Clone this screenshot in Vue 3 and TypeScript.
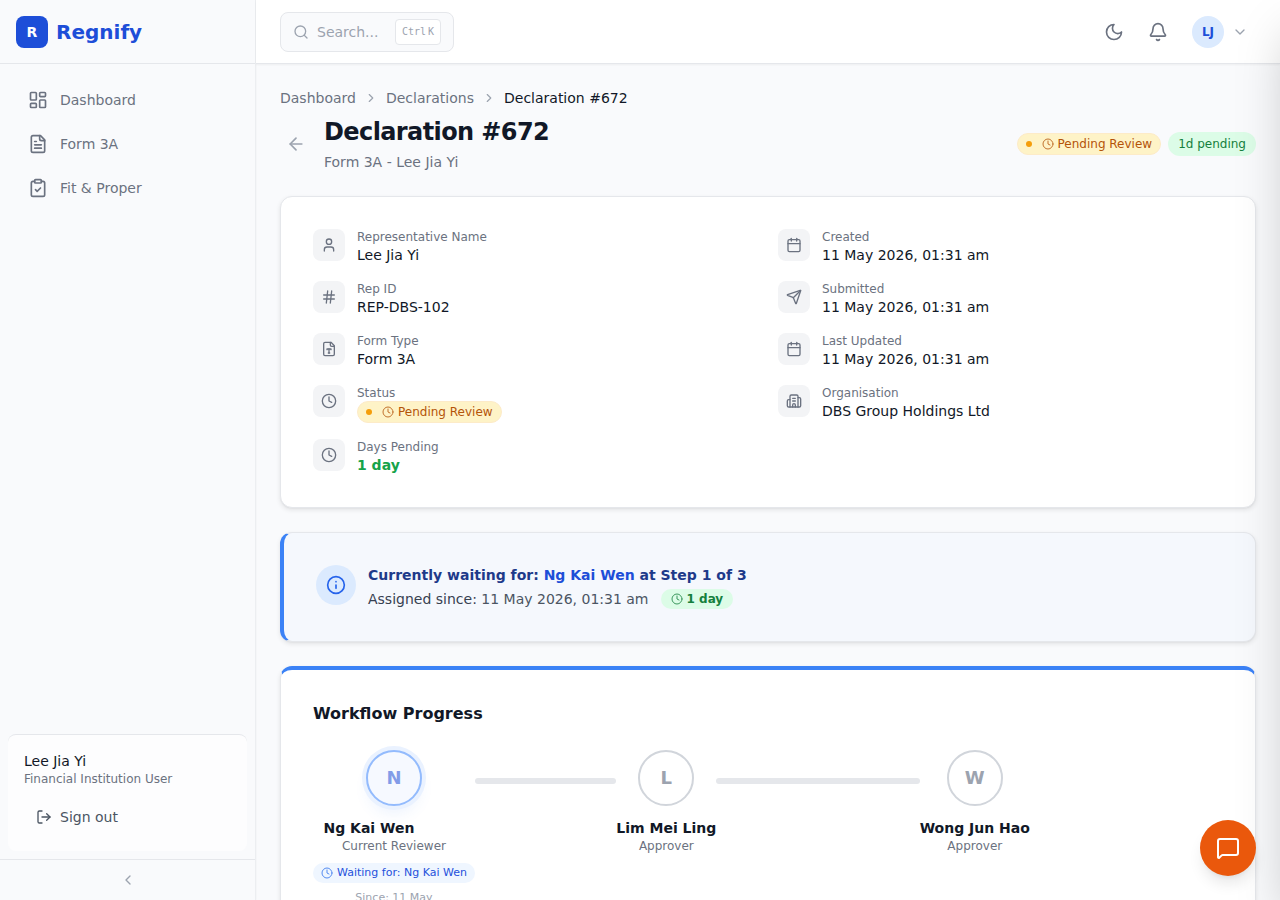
<script setup lang="ts">
import { h, ref, type FunctionalComponent } from 'vue'

const icons: Record<string, string[]> = {
  dashboard: [
    'M4 3h5a1 1 0 0 1 1 1v7a1 1 0 0 1-1 1H4a1 1 0 0 1-1-1V4a1 1 0 0 1 1-1z',
    'M15 3h5a1 1 0 0 1 1 1v3a1 1 0 0 1-1 1h-5a1 1 0 0 1-1-1V4a1 1 0 0 1 1-1z',
    'M15 12h5a1 1 0 0 1 1 1v7a1 1 0 0 1-1 1h-5a1 1 0 0 1-1-1v-7a1 1 0 0 1 1-1z',
    'M4 16h5a1 1 0 0 1 1 1v3a1 1 0 0 1-1 1H4a1 1 0 0 1-1-1v-3a1 1 0 0 1 1-1z',
  ],
  fileText: [
    'M15 2H6a2 2 0 0 0-2 2v16a2 2 0 0 0 2 2h12a2 2 0 0 0 2-2V7Z',
    'M14 2v4a2 2 0 0 0 2 2h4',
    'M10 9H8',
    'M16 13H8',
    'M16 17H8',
  ],
  fileType: [
    'M15 2H6a2 2 0 0 0-2 2v16a2 2 0 0 0 2 2h12a2 2 0 0 0 2-2V7Z',
    'M14 2v4a2 2 0 0 0 2 2h4',
    'M9 13v-1h6v1',
    'M12 12v6',
    'M11 18h2',
  ],
  clipboard: [
    'M9 2h6a1 1 0 0 1 1 1v2a1 1 0 0 1-1 1H9a1 1 0 0 1-1-1V3a1 1 0 0 1 1-1z',
    'M16 4h2a2 2 0 0 1 2 2v14a2 2 0 0 1-2 2H6a2 2 0 0 1-2-2V6a2 2 0 0 1 2-2h2',
    'm9 14 2 2 4-4',
  ],
  signOut: ['m16 17 5-5-5-5', 'M21 12H9', 'M9 21H5a2 2 0 0 1-2-2V5a2 2 0 0 1 2-2h4'],
  chevronLeft: ['m15 18-6-6 6-6'],
  chevronRight: ['m9 18 6-6-6-6'],
  chevronDown: ['m6 9 6 6 6-6'],
  arrowLeft: ['m12 19-7-7 7-7', 'M19 12H5'],
  search: ['M19 11a8 8 0 1 1-16 0 8 8 0 0 1 16 0z', 'm21 21-4.3-4.3'],
  moon: ['M12 3a6 6 0 0 0 9 9 9 9 0 1 1-9-9Z'],
  bell: [
    'M10.268 21a2 2 0 0 0 3.464 0',
    'M3.262 15.326A1 1 0 0 0 4 17h16a1 1 0 0 0 .74-1.673C19.41 13.956 18 12.499 18 8A6 6 0 0 0 6 8c0 4.499-1.411 5.956-2.738 7.326',
  ],
  clock: ['M22 12a10 10 0 1 1-20 0 10 10 0 0 1 20 0z', 'M12 6v6l4 2'],
  info: ['M22 12a10 10 0 1 1-20 0 10 10 0 0 1 20 0z', 'M12 16v-4', 'M12 8h.01'],
  user: ['M19 21v-2a4 4 0 0 0-4-4H9a4 4 0 0 0-4 4v2', 'M16 7a4 4 0 1 1-8 0 4 4 0 0 1 8 0z'],
  hash: ['M4 9h16', 'M4 15h16', 'M10 3 8 21', 'M16 3l-2 18'],
  calendar: [
    'M8 2v4',
    'M16 2v4',
    'M5 4h14a2 2 0 0 1 2 2v14a2 2 0 0 1-2 2H5a2 2 0 0 1-2-2V6a2 2 0 0 1 2-2z',
    'M3 10h18',
  ],
  send: [
    'M14.536 21.686a.5.5 0 0 0 .937-.024l6.5-19a.496.496 0 0 0-.635-.635l-19 6.5a.5.5 0 0 0-.024.937l7.93 3.18a2 2 0 0 1 1.112 1.11z',
    'm21.854 2.147-10.94 10.939',
  ],
  building: [
    'M10 12h4',
    'M10 8h4',
    'M14 21v-3a2 2 0 0 0-4 0v3',
    'M6 10H4a2 2 0 0 0-2 2v7a2 2 0 0 0 2 2h16a2 2 0 0 0 2-2V9a2 2 0 0 0-2-2h-2',
    'M6 21V5a2 2 0 0 1 2-2h8a2 2 0 0 1 2 2v16',
  ],
  message: [
    'M22 17a2 2 0 0 1-2 2H6.828a2 2 0 0 0-1.414.586l-2.202 2.202A.71.71 0 0 1 2 21.286V5a2 2 0 0 1 2-2h16a2 2 0 0 1 2 2z',
  ],
}

const Icon: FunctionalComponent<{ name: string; size: number; weight?: number }> = (props) =>
  h(
    'svg',
    {
      width: props.size,
      height: props.size,
      viewBox: '0 0 24 24',
      fill: 'none',
      stroke: 'currentColor',
      'stroke-width': props.weight ?? 2,
      'stroke-linecap': 'round',
      'stroke-linejoin': 'round',
      'aria-hidden': 'true',
      style: { display: 'block', flexShrink: 0 },
    },
    icons[props.name].map((d) => h('path', { d })),
  )
Icon.props = ['name', 'size', 'weight']

interface Field {
  icon: string
  label: string
  value: string
  kind?: 'status' | 'days'
}

interface Step {
  name: string
  role: string
  waiting?: string
  since?: string
}

const query = ref('')

const nav = [
  { icon: 'dashboard', label: 'Dashboard' },
  { icon: 'fileText', label: 'Form 3A' },
  { icon: 'clipboard', label: 'Fit & Proper' },
]

const columns: Field[][] = [
  [
    { icon: 'user', label: 'Representative Name', value: 'Lee Jia Yi' },
    { icon: 'hash', label: 'Rep ID', value: 'REP-DBS-102' },
    { icon: 'fileType', label: 'Form Type', value: 'Form 3A' },
    { icon: 'clock', label: 'Status', value: 'Pending Review', kind: 'status' },
    { icon: 'clock', label: 'Days Pending', value: '1 day', kind: 'days' },
  ],
  [
    { icon: 'calendar', label: 'Created', value: '11 May 2026, 01:31 am' },
    { icon: 'send', label: 'Submitted', value: '11 May 2026, 01:31 am' },
    { icon: 'calendar', label: 'Last Updated', value: '11 May 2026, 01:31 am' },
    { icon: 'building', label: 'Organisation', value: 'DBS Group Holdings Ltd' },
  ],
]

const steps: Step[] = [
  { name: 'Ng Kai Wen', role: 'Current Reviewer', waiting: 'Waiting for: Ng Kai Wen', since: 'Since: 11 May' },
  { name: 'Lim Mei Ling', role: 'Approver' },
  { name: 'Wong Jun Hao', role: 'Approver' },
]
</script>

<template>
  <div class="shell">
    <aside class="sidebar">
      <div class="brand">
        <span class="brand-mark">R</span>
        <span class="brand-name">Regnify</span>
      </div>
      <nav class="nav" aria-label="Main">
        <a v-for="item in nav" :key="item.label" href="#" class="nav-link">
          <Icon :name="item.icon" :size="20" />
          {{ item.label }}
        </a>
      </nav>
      <div class="account">
        <div class="account-name">Lee Jia Yi</div>
        <div class="account-role">Financial Institution User</div>
        <button type="button" class="sign-out">
          <Icon name="signOut" :size="16" />
          Sign out
        </button>
      </div>
      <button type="button" class="collapse" aria-label="Collapse sidebar">
        <Icon name="chevronLeft" :size="16" />
      </button>
    </aside>

    <div class="workspace">
      <header class="topbar">
        <label class="search">
          <Icon name="search" :size="16" />
          <input v-model="query" type="text" placeholder="Search..." aria-label="Search" />
          <kbd class="shortcut"><span>Ctrl</span><span>K</span></kbd>
        </label>
        <div class="actions">
          <button type="button" class="icon-button" aria-label="Toggle dark mode">
            <Icon name="moon" :size="20" />
          </button>
          <button type="button" class="icon-button" aria-label="Notifications">
            <Icon name="bell" :size="20" />
          </button>
          <button type="button" class="profile" aria-label="Account menu">
            <span class="avatar">LJ</span>
            <Icon name="chevronDown" :size="16" />
          </button>
        </div>
      </header>

      <main class="page">
        <nav class="crumbs" aria-label="Breadcrumb">
          <a href="#">Dashboard</a>
          <Icon name="chevronRight" :size="14" />
          <a href="#">Declarations</a>
          <Icon name="chevronRight" :size="14" />
          <span class="crumb-current" aria-current="page">Declaration #672</span>
        </nav>

        <div class="heading">
          <button type="button" class="back" aria-label="Back">
            <Icon name="arrowLeft" :size="20" />
          </button>
          <div class="heading-text">
            <h1>Declaration #672</h1>
            <p>Form 3A - Lee Jia Yi</p>
          </div>
          <div class="heading-badges">
            <span class="status">
              <span class="dot"></span>
              <span class="status-label"><Icon name="clock" :size="12" />Pending Review</span>
            </span>
            <span class="age">1d pending</span>
          </div>
        </div>

        <section class="card details">
          <div v-for="(column, i) in columns" :key="i" class="detail-column">
            <div v-for="field in column" :key="field.label" class="field">
              <span class="tile"><Icon :name="field.icon" :size="16" /></span>
              <div class="field-text">
                <div class="field-label">{{ field.label }}</div>
                <span v-if="field.kind === 'status'" class="status">
                  <span class="dot"></span>
                  <span class="status-label"><Icon name="clock" :size="12" />{{ field.value }}</span>
                </span>
                <div v-else class="field-value" :class="{ days: field.kind === 'days' }">{{ field.value }}</div>
              </div>
            </div>
          </div>
        </section>

        <section class="card waiting">
          <span class="waiting-icon"><Icon name="info" :size="20" /></span>
          <div class="waiting-text">
            <p class="waiting-title">Currently waiting for: <span>Ng Kai Wen</span> at Step 1 of 3</p>
            <div class="waiting-meta">
              <span><span class="meta-label">Assigned since:</span> 11 May 2026, 01:31 am</span>
              <span class="elapsed"><Icon name="clock" :size="12" />1 day</span>
            </div>
          </div>
        </section>

        <section class="card workflow">
          <h2>Workflow Progress</h2>
          <ol class="steps">
            <li v-for="(step, i) in steps" :key="step.name" class="step" :class="{ current: i === 0 }">
              <div class="person">
                <span class="person-mark">{{ step.name[0] }}</span>
                <span class="person-name">{{ step.name }}</span>
                <span class="person-role">{{ step.role }}</span>
                <span v-if="step.waiting" class="person-waiting"><Icon name="clock" :size="12" />{{ step.waiting }}</span>
                <span v-if="step.since" class="person-since">{{ step.since }}</span>
              </div>
              <span v-if="i < steps.length - 1" class="connector"></span>
            </li>
          </ol>
        </section>
      </main>
    </div>

    <div class="drawer" aria-hidden="true"></div>
    <button type="button" class="chat" aria-label="Open chat">
      <Icon name="message" :size="24" />
    </button>
  </div>
</template>

<style>
body {
  margin: 0;
  background: #f9fafc;
}
</style>

<style scoped>
.shell,
.shell * {
  box-sizing: border-box;
}

.shell {
  display: flex;
  height: 100vh;
  overflow: hidden;
  background: #f9fafc;
  color: #111827;
  font-family: 'DejaVu Sans', sans-serif;
  font-size: 14px;
  line-height: 20px;
}

button,
input {
  margin: 0;
  padding: 0;
  border: 0;
  background: none;
  color: inherit;
  font: inherit;
}

button {
  cursor: pointer;
}

a {
  color: inherit;
  text-decoration: none;
}

h1,
h2,
p,
ol {
  margin: 0;
  padding: 0;
}

.sidebar {
  display: flex;
  flex-direction: column;
  flex: 0 0 256px;
  border-right: 1px solid #eceef1;
  box-shadow: 0 1px 2px rgba(0, 0, 0, 0.05);
}

.brand {
  display: flex;
  align-items: center;
  gap: 8px;
  height: 64px;
  padding: 0 16px;
  border-bottom: 1px solid #e5e7eb;
}

.brand-mark {
  display: grid;
  place-items: center;
  width: 32px;
  height: 32px;
  border-radius: 8px;
  background: #1d4ed8;
  color: #fff;
  font-weight: 700;
}

.brand-name {
  color: #1d4ed8;
  font-size: 20px;
  font-weight: 700;
  line-height: 28px;
}

.nav {
  display: flex;
  flex: 1;
  flex-direction: column;
  gap: 4px;
  padding: 16px;
}

.nav-link {
  display: flex;
  align-items: center;
  gap: 12px;
  height: 40px;
  padding: 0 12px;
  border-radius: 8px;
  color: #6b7280;
}

.account {
  margin: 8px;
  padding: 16px;
  border-top: 1px solid #e5e7eb;
  border-radius: 8px;
  background: #fdfdfe;
}

.account-role {
  color: #6b7280;
  font-size: 12px;
  line-height: 16px;
}

.sign-out {
  display: flex;
  align-items: center;
  gap: 8px;
  height: 36px;
  margin-top: 12px;
  padding: 0 12px;
  color: #4b5563;
}

.collapse {
  display: grid;
  place-items: center;
  height: 41px;
  border-top: 1px solid #e5e7eb;
  color: #9ca3af;
}

.workspace {
  display: flex;
  flex: 1;
  flex-direction: column;
  min-width: 0;
}

.topbar {
  display: flex;
  flex: 0 0 64px;
  align-items: center;
  justify-content: space-between;
  padding: 0 24px;
  border-bottom: 1px solid #e5e7eb;
  background: #fff;
  box-shadow: 0 1px 2px rgba(0, 0, 0, 0.05);
}

.search {
  display: flex;
  align-items: center;
  gap: 8px;
  width: 174px;
  height: 40px;
  padding: 0 12px;
  border: 1px solid #e5e7eb;
  border-radius: 8px;
  background: #f9fafc;
  color: #9ca3af;
}

.search input {
  flex: 1;
  min-width: 0;
  outline: 0;
  color: #111827;
}

.search input::placeholder {
  color: #9ca3af;
  opacity: 1;
}

.shortcut {
  display: flex;
  gap: 2px;
  padding: 2px 6px;
  border: 1px solid #e5e7eb;
  border-radius: 4px;
  background: #fff;
  font-family: 'DejaVu Sans Mono', monospace;
  font-size: 10px;
}

.actions {
  display: flex;
  align-items: center;
  gap: 8px;
}

.icon-button {
  padding: 8px;
  color: #6b7280;
}

.profile {
  display: flex;
  align-items: center;
  gap: 8px;
  padding: 0 8px;
  color: #9ca3af;
}

.avatar {
  display: grid;
  place-items: center;
  width: 32px;
  height: 32px;
  border-radius: 50%;
  background: #dbeafe;
  color: #1d4ed8;
  font-size: 12px;
  font-weight: 700;
}

.page {
  display: flex;
  flex: 1;
  flex-direction: column;
  gap: 24px;
  min-height: 0;
  padding: 24px;
  overflow-y: auto;
  scrollbar-width: none;
}

.crumbs {
  display: flex;
  align-items: center;
  gap: 8px;
  margin-bottom: -16px;
  color: #9ca3af;
}

.crumbs a {
  color: #6b7280;
}

.crumbs .crumb-current {
  color: #111827;
}

.heading {
  display: flex;
  align-items: center;
  gap: 12px;
}

.back {
  padding: 6px;
  color: #9ca3af;
}

.heading-text {
  flex: 1;
  min-width: 0;
}

.heading-text h1 {
  font-size: 24px;
  font-weight: 700;
  letter-spacing: -0.025em;
  line-height: 32px;
}

.heading-text p {
  margin-top: 4px;
  color: #6b7280;
}

.heading-badges {
  display: flex;
  align-items: center;
  gap: 7px;
}

.status {
  display: flex;
  align-items: center;
  gap: 10px;
  width: fit-content;
  padding: 0 8px;
  border: 1px solid #fdebc8;
  border-radius: 11px;
  background: #fef3c7;
  color: #b45309;
  font-size: 12px;
  white-space: nowrap;
}

.status-label {
  display: flex;
  align-items: center;
  gap: 4px;
}

.status-label svg,
.elapsed svg,
.person-waiting svg {
  opacity: 0.8;
}

.dot {
  width: 6px;
  height: 6px;
  border-radius: 50%;
  background: #f59e0b;
}

.age {
  padding: 2px 10px;
  border-radius: 12px;
  background: #dcfce7;
  color: #15803d;
  font-size: 12px;
  white-space: nowrap;
}

.card {
  flex-shrink: 0;
  padding: 32px;
  border: 1px solid #e5e7eb;
  border-radius: 12px;
  background: #fff;
  box-shadow: 0 2px 5px rgba(0, 0, 0, 0.09), 0 1px 2px -1px rgba(0, 0, 0, 0.1);
}

.details {
  display: grid;
  grid-template-columns: 1fr 1fr;
  gap: 20px;
}

.detail-column {
  display: flex;
  flex-direction: column;
  gap: 16px;
}

.field {
  display: flex;
  gap: 12px;
}

.tile {
  display: grid;
  place-items: center;
  width: 32px;
  height: 32px;
  border-radius: 8px;
  background: #f3f4f6;
  color: #6b7280;
}

.field-label {
  color: #6b7280;
  font-size: 12px;
  line-height: 16px;
}

.days {
  color: #16a34a;
  font-weight: 700;
}

.waiting {
  display: flex;
  gap: 12px;
  border-left: 4px solid #3b82f6;
  background: #f5f8fd;
}

.waiting-icon {
  display: grid;
  flex-shrink: 0;
  place-items: center;
  width: 40px;
  height: 40px;
  border-radius: 50%;
  background: #dbeafe;
  color: #2563eb;
}

.waiting-title {
  color: #1e3a8a;
  font-weight: 700;
}

.waiting-title span {
  color: #1d4ed8;
}

.waiting-meta {
  display: flex;
  align-items: center;
  gap: 12px;
  margin-top: 4px;
  color: #4b5563;
}

.meta-label {
  color: #374151;
}

.elapsed {
  display: flex;
  align-items: center;
  gap: 4px;
  padding: 0 10px;
  border-radius: 10px;
  background: #dcfce7;
  color: #15803d;
  font-size: 12px;
  font-weight: 700;
}

.workflow {
  border-top: 4px solid #3b82f6;
}

.workflow h2 {
  font-size: 16px;
  font-weight: 700;
  line-height: 24px;
}

.steps {
  display: flex;
  margin-top: 24px;
  list-style: none;
}

.step {
  display: flex;
  flex: 1;
  min-width: 0;
}

.person {
  display: flex;
  flex-direction: column;
  align-items: center;
  white-space: nowrap;
}

.person-mark {
  display: grid;
  place-items: center;
  width: 56px;
  height: 56px;
  margin-bottom: 12px;
  border: 2px solid #d1d5db;
  border-radius: 50%;
  background: #fff;
  color: #9ca3af;
  font-size: 18px;
  font-weight: 700;
}

.current .person-mark {
  border-color: #93bbfd;
  background: #f6f9ff;
  color: #829ce8;
  box-shadow: 0 0 0 4px #eaf2ff, 0 10px 15px -3px rgba(59, 130, 246, 0.1);
}

.person-name {
  font-weight: 700;
}

.current .person-name {
  padding-right: 50px;
}

.person-role {
  color: #6b7280;
  font-size: 12px;
  line-height: 16px;
}

.person-waiting {
  display: flex;
  align-items: center;
  gap: 4px;
  margin-top: 9px;
  padding: 0 8px;
  border-radius: 10px;
  background: #eff6ff;
  color: #2451dc;
  font-size: 11px;
}

.person-waiting svg {
  color: #2f72ef;
}

.person-since {
  margin-top: 5px;
  color: #9ca3af;
  font-size: 11px;
}

.connector {
  flex: 1;
  height: 6px;
  margin-top: 28px;
  border-radius: 3px;
  background: #e5e7eb;
}

.drawer {
  position: fixed;
  top: 0;
  bottom: 0;
  left: 100%;
  width: 400px;
  box-shadow: 0 25px 50px -12px rgba(0, 0, 0, 0.25);
}

.chat {
  position: fixed;
  right: 24px;
  bottom: 24px;
  display: grid;
  place-items: center;
  width: 56px;
  height: 56px;
  border-radius: 50%;
  background: #ea580c;
  color: #fff;
  box-shadow: 0 10px 15px -3px rgba(0, 0, 0, 0.1), 0 4px 6px -4px rgba(0, 0, 0, 0.1);
}
</style>
